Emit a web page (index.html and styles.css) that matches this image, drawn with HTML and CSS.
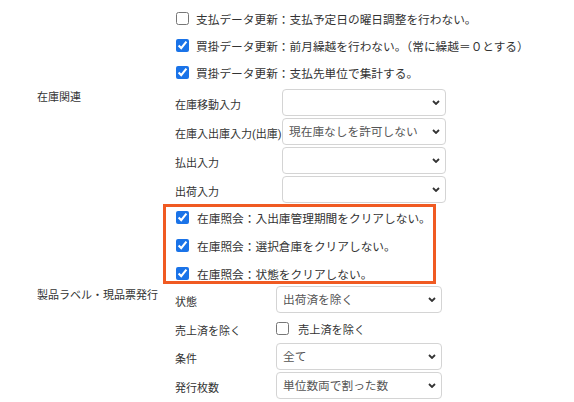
FILE: index.html
```html
<!DOCTYPE html>
<html lang="ja">
<head>
  <meta charset="UTF-8" />
  <title>設定</title>
  <link rel="stylesheet" href="styles.css">
</head>
<body>
  <div class="pagina">

    <div class="grupo">
      <div class="grupo-titulo"></div>
      <div class="grupo-cuerpo">
        <label class="fila-check"><input type="checkbox"><span>支払データ更新：支払予定日の曜日調整を行わない。</span></label>
        <label class="fila-check"><input type="checkbox" checked><span>買掛データ更新：前月繰越を行わない。（常に繰越＝０とする）</span></label>
        <label class="fila-check"><input type="checkbox" checked><span>買掛データ更新：支払先単位で集計する。</span></label>
      </div>
    </div>

    <div class="grupo zaiko">
      <div class="grupo-titulo">在庫関連</div>
      <div class="grupo-cuerpo">
        <div class="campo">
          <span class="campo-nombre">在庫移動入力</span>
          <div class="selector"><select><option></option></select><svg class="flecha" viewBox="0 0 8 5"><path d="M1 1l3 3 3-3"/></svg></div>
        </div>
        <div class="campo">
          <span class="campo-nombre">在庫入出庫入力(出庫)</span>
          <div class="selector"><select><option>現在庫なしを許可しない</option></select><svg class="flecha" viewBox="0 0 8 5"><path d="M1 1l3 3 3-3"/></svg></div>
        </div>
        <div class="campo">
          <span class="campo-nombre">払出入力</span>
          <div class="selector"><select><option></option></select><svg class="flecha" viewBox="0 0 8 5"><path d="M1 1l3 3 3-3"/></svg></div>
        </div>
        <div class="campo">
          <span class="campo-nombre">出荷入力</span>
          <div class="selector"><select><option></option></select><svg class="flecha" viewBox="0 0 8 5"><path d="M1 1l3 3 3-3"/></svg></div>
        </div>

        <div class="marcado">
          <label class="fila-check"><input type="checkbox" checked><span>在庫照会：入出庫管理期間をクリアしない。</span></label>
          <label class="fila-check"><input type="checkbox" checked><span>在庫照会：選択倉庫をクリアしない。</span></label>
          <label class="fila-check"><input type="checkbox" checked><span>在庫照会：状態をクリアしない。</span></label>
        </div>
      </div>
    </div>

    <div class="grupo etiqueta">
      <div class="grupo-titulo">製品ラベル・現品票発行</div>
      <div class="grupo-cuerpo">
        <div class="campo">
          <span class="campo-nombre">状態</span>
          <div class="selector"><select><option>出荷済を除く</option></select><svg class="flecha" viewBox="0 0 8 5"><path d="M1 1l3 3 3-3"/></svg></div>
        </div>
        <div class="campo campo-check">
          <span class="campo-nombre">売上済を除く</span>
          <label class="fila-check"><input type="checkbox"><span>売上済を除く</span></label>
        </div>
        <div class="campo">
          <span class="campo-nombre">条件</span>
          <div class="selector"><select><option>全て</option></select><svg class="flecha" viewBox="0 0 8 5"><path d="M1 1l3 3 3-3"/></svg></div>
        </div>
        <div class="campo">
          <span class="campo-nombre">発行枚数</span>
          <div class="selector"><select><option>単位数両で割った数</option></select><svg class="flecha" viewBox="0 0 8 5"><path d="M1 1l3 3 3-3"/></svg></div>
        </div>
        <div class="campo">
          <span class="campo-nombre"></span>
          <div class="numero"><input type="text"></div>
        </div>
      </div>
    </div>

  </div>
</body>
</html>
```

FILE: styles.css
```css
body {
  margin: 0;
  font-family: Roboto, "Noto Sans CJK JP", sans-serif;
  font-size: 11.7px;
  color: #333;
  background: #fff;
}

.pagina {
  padding: 5px 0 0 37px;
}

.grupo {
  display: grid;
  grid-template-columns: 138px 1fr;
}

.grupo-titulo {
  font-size: 11px;
  line-height: 16px;
  padding-top: 1px;
}

.grupo-cuerpo {
  display: flex;
  flex-direction: column;
}

/* filas con checkbox */
.fila-check {
  display: flex;
  align-items: center;
  gap: 7px;
  height: 27px;
  padding-left: 1px;
  white-space: nowrap;
}

.fila-check input {
  flex: none;
  width: 13px;
  height: 13px;
  margin: 0;
  accent-color: #1a73e8;
}

/* campos con nombre + selector */
.campo {
  display: grid;
  align-items: center;
  height: 27px;
}

.campo-nombre {
  font-size: 11px;
  white-space: nowrap;
  padding-top: 2px;
}

.zaiko {
  margin-top: 3px;
}

.zaiko .grupo-cuerpo {
  gap: 2px;
}

.zaiko .campo {
  grid-template-columns: 107px 164px;
}

.etiqueta {
  margin-top: 2px;
}

.etiqueta .grupo-titulo {
  padding-top: 2px;
}

.etiqueta .grupo-cuerpo {
  gap: 2px;
}

.etiqueta .campo {
  grid-template-columns: 101px 166px;
}

.etiqueta .campo-check {
  height: 26px;
}

.etiqueta .campo-check .fila-check {
  padding-left: 0;
  gap: 9px;
  font-size: 11.2px;
}

.selector {
  position: relative;
  height: 27px;
}

.selector select {
  appearance: none;
  width: 100%;
  height: 27px;
  margin: 0;
  padding: 0 20px 0 6px;
  border: 1px solid #d4d4d4;
  border-radius: 4px;
  background: #fff;
  font-family: inherit;
  font-size: 11.7px;
  color: #555;
}

.flecha {
  position: absolute;
  right: 6px;
  top: 11px;
  width: 8px;
  height: 5px;
  fill: none;
  stroke: #333;
  stroke-width: 1.8;
  pointer-events: none;
}

/* recuadro naranja alrededor de las opciones de 在庫照会 */
.marcado {
  margin-top: -1px;
  margin-left: -12px;
  width: 273px;
  box-sizing: border-box;
  border: 3px solid #f05a22;
  padding: 2px 0 0 10px;
  display: flex;
  flex-direction: column;
  gap: 12px;
}

.marcado .fila-check {
  height: 16px;
  gap: 8px;
  padding-left: 0;
}

.numero {
  padding-left: 41px;
  padding-top: 2px;
}

.numero input {
  width: 36px;
  height: 25px;
  box-sizing: border-box;
  border: 1px solid #ccc;
  border-radius: 3px;
  margin: 0;
}
```
